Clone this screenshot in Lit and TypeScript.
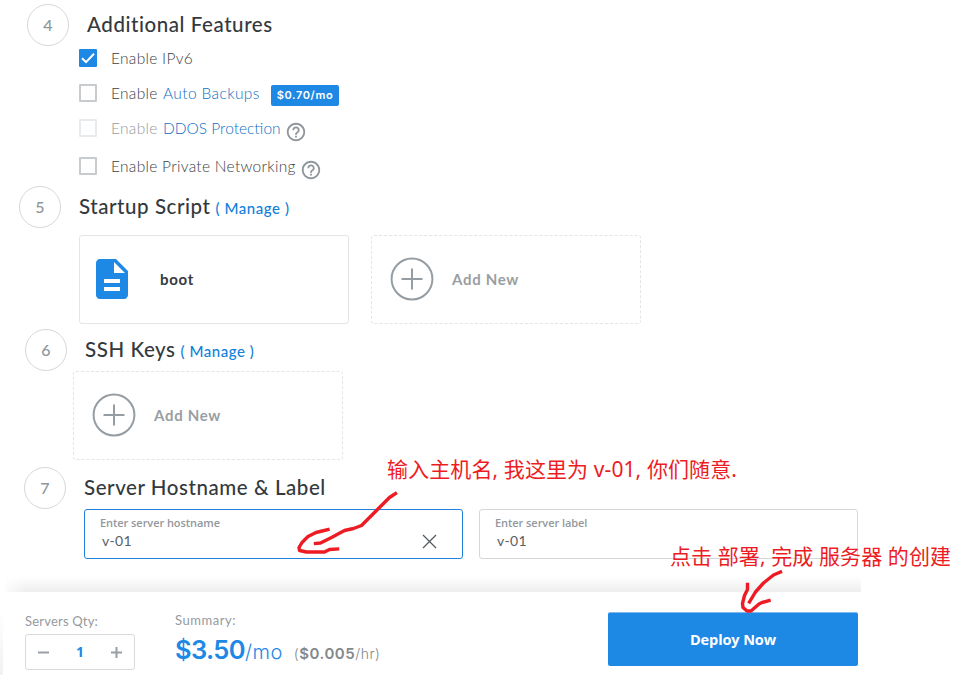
import { LitElement, html, css, svg } from "lit";
import { customElement } from "lit/decorators.js";

const help = html`<svg class="help" viewBox="0 0 24 24"><path d="M11 18h2v-2h-2v2zm1-16C6.480 2 2 6.480 2 12s4.480 10 10 10 10-4.480 10-10S17.520 2 12 2zm0 18c-4.410 0-8-3.590-8-8s3.590-8 8-8 8 3.590 8 8-3.590 8-8 8zm0-14c-2.210 0-4 1.790-4 4h2c0-1.100.9-2 2-2s2 .9 2 2c0 2-3 1.750-3 5h2c0-2.250 3-2.500 3-5 0-2.210-1.790-4-4-4z"/></svg>`;
const addCard = html`<div class="card dashed"><svg class="add" viewBox="0 0 44 44"><circle cx="22" cy="22" r="20.400"/><path d="M22 11.500v21M11.500 22h21"/></svg><span class="addlabel">Add New</span></div>`;

@customElement("app-root")
export class AppRoot extends LitElement {
  static styles = css`
    * { box-sizing: border-box; }
    :host { display: block; position: relative; width: 968px; height: 699px; overflow: hidden; background: #fff; color: #5d6266; font-family: Lato, "Open Sans", sans-serif; white-space: nowrap; }
    .head { display: flex; align-items: center; height: 42px; }
    .num { width: 42px; height: 42px; border: 1px solid #d3d8db; border-radius: 50%; display: grid; place-items: center; padding-bottom: 2px; font: 500 16px Lato; color: #8f979c; margin-right: 18px; }
    h2 { margin: 0; padding-bottom: 2px; font: 500 20.500px/24px Lato; letter-spacing: 0.560px; color: #34393e; }
    .manage { font: 500 15px/20px Lato; letter-spacing: 0.550px; color: #1180dc; margin-left: 5px; padding-top: 1px; }
    .s4 { height: 186px; padding: 4px 0 0 27px; }
    .s5 { height: 143px; padding-left: 19px; }
    .s6 { height: 138px; padding-left: 25px; }
    .s7 { height: 125px; padding-left: 24px; }
    .opts { padding: 3px 0 0 52px; }
    .opt { display: flex; height: 35px; align-items: flex-start; font: 300 15.500px/18px Lato; letter-spacing: 0.300px; color: #3c4043; }
    .opt.tall { height: 38px; }
    .box { width: 18px; height: 18px; border: 2px solid #c8cbce; border-radius: 1px; margin-right: 14px; flex: none; }
    .box.on { background: #1e88e5; border: 0; }
    .box svg { width: 18px; height: 18px; display: block; }
    .grey { width: 52px; }
    .blue { color: #1170c4; }
    .backups { letter-spacing: 0.380px; width: 96px; }
    .ddos { letter-spacing: 0; width: 118px; }
    .off .box { border-color: #e7ebee; }
    .off .grey { color: #96999c; }
    .badge { background: #1e88e5; color: #fff; border-radius: 2px; width: 68px; height: 21px; margin: 1px 0 0 12px; font: 600 11px/21px Inter; letter-spacing: 0.600px; text-align: center; }
    .help { width: 22px; height: 22px; margin: 2px 0 0 4px; fill: #8e959b; flex: none; }
    .cards { display: flex; gap: 22px; }
    .s5 .cards { padding: 7px 0 0 60px; }
    .s6 .cards { padding-left: 48px; }
    .card { width: 270px; height: 89px; border: 1px solid #e3e5e6; border-radius: 3px; display: flex; align-items: center; padding-bottom: 1px; }
    .dashed { border-style: dashed; }
    .doc { width: 32px; height: 40px; margin: 0 32px 0 16px; fill: #1e88e5; }
    .boot { font: 700 15px Lato; letter-spacing: 0.700px; color: #34393e; }
    .add { width: 44px; height: 44px; margin: 0 18px; stroke: #969da2; stroke-width: 2; fill: none; }
    .addlabel { font: 700 15px Lato; letter-spacing: 0.690px; padding-bottom: 1px; color: #999ea2; }
    .fields { display: flex; gap: 16px; padding-left: 60px; }
    .field { width: 379px; height: 50px; border: 1px solid #d5d8da; border-radius: 3px; padding: 5px 15px; position: relative; }
    .field.active { border-color: #1e82dc; }
    .field label { display: block; font: 600 11px/15px "Open Sans"; letter-spacing: -0.060px; color: #93989d; }
    .val { display: block; font: 400 14px/20px Lato; letter-spacing: 0.330px; color: #5b6064; padding: 1px 0 0 2px; }
    .x { position: absolute; right: 25px; top: 24px; width: 15px; height: 15px; stroke: #555a5e; fill: none; stroke-width: 1.300; }
    .shade { width: 856px; height: 16px; margin: 17px 0 0 -19px; background: linear-gradient(90deg, #fffc, transparent 20px), linear-gradient(#fff, #eee); }
    .foot { height: 107px; display: flex; align-items: flex-start; padding-left: 25px; position: relative; }
    .edge { position: absolute; left: 0; top: 18px; width: 3px; height: 65px; background: linear-gradient(#fff, #f1f1f1); }
    .qty { width: 150px; padding-top: 20px; }
    .cap { display: block; font: 400 13px/18px Lato; letter-spacing: 0.200px; color: #959a9e; }
    .sum .cap { letter-spacing: 0.540px; }
    .step { width: 110px; height: 36px; margin-top: 4px; border: 1px solid #d7d9db; border-radius: 3px; display: flex; align-items: center; justify-content: space-between; padding: 0 12px; color: #1e88e5; font: 700 14px "Open Sans"; }
    .step span { padding-bottom: 2px; }
    .step svg { width: 11px; height: 11px; stroke: #999fa4; stroke-width: 2; }
    .sum { width: 433px; padding-top: 19px; }
    .price { display: flex; align-items: baseline; height: 40px; padding-top: 5px; color: #1e88e5; font: 300 20px/32px Inter; letter-spacing: 0.500px; }
    .price b { font: 600 25.500px/32px Inter; letter-spacing: -0.600px; }
    .hr { color: #85888b; font: 300 14px/32px Inter; letter-spacing: 0.550px; margin-left: 11px; }
    .price .hr b { font: 600 15px/32px Inter; letter-spacing: 0.530px; }
    .deploy { width: 250px; height: 54px; margin-top: 20px; border: 0; border-top: 1px solid #7fbaf0; border-radius: 2px; background: #1e88e5; color: #fff; font: 700 14.500px "Open Sans"; letter-spacing: -0.100px; padding: 0; }
    .note { position: absolute; color: #ed1c24; font: 400 21px/30px "Noto Sans", "Noto Sans CJK SC", sans-serif; letter-spacing: 0.100px; }
    .n1 { left: 387px; top: 454px; }
    .n2 { left: 670px; top: 541px; }
    .arrows { position: absolute; left: 0; top: 0; width: 968px; height: 699px; fill: none; stroke: #ed1c24; stroke-width: 3.400; stroke-linecap: square; stroke-linejoin: round; }
  `;
  render() {
    return html`
      <section class="s4">
        <div class="head"><span class="num">4</span><h2>Additional Features</h2></div>
        <div class="opts">
          <div class="opt"><span class="box on"><svg viewBox="0 0 18 18"><path d="M3 9.300l4 3.900L15 4.800" fill="none" stroke="#fff" stroke-width="2"/></svg></span><span>Enable IPv6</span></div>
          <div class="opt"><span class="box"></span><span class="grey">Enable</span><span class="blue backups">Auto Backups</span><span class="badge">$0.70/mo</span></div>
          <div class="opt tall off"><span class="box"></span><span class="grey">Enable</span><span class="blue ddos">DDOS Protection</span>${help}</div>
          <div class="opt"><span class="box"></span><span>Enable Private Networking</span>${help}</div>
        </div>
      </section>
      <section class="s5">
        <div class="head"><span class="num">5</span><h2>Startup Script</h2><span class="manage">( Manage )</span></div>
        <div class="cards">
          <div class="card"><svg class="doc" viewBox="4 2 16 20"><path d="M14 2H6c-1.100 0-1.990.9-1.990 2L4 20c0 1.100.89 2 1.990 2H18c1.100 0 2-.9 2-2V8l-6-6zm2 16H8v-2h8v2zm0-4H8v-2h8v2zm-3-5V3.500L18.500 9H13z"/></svg><span class="boot">boot</span></div>
          ${addCard}
        </div>
      </section>
      <section class="s6">
        <div class="head"><span class="num">6</span><h2>SSH Keys</h2><span class="manage">( Manage )</span></div>
        <div class="cards">${addCard}</div>
      </section>
      <section class="s7">
        <div class="head"><span class="num">7</span><h2>Server Hostname &amp; Label</h2></div>
        <div class="fields">
          <div class="field active"><label>Enter server hostname</label><span class="val">v-01</span><svg class="x" viewBox="0 0 15 15"><path d="M1 1l13 13M14 1L1 14"/></svg></div>
          <div class="field"><label>Enter server label</label><span class="val">v-01</span></div>
        </div>
        <div class="shade"></div>
      </section>
      <footer class="foot">
        <span class="edge"></span>
        <div class="qty"><span class="cap">Servers Qty:</span>
          <div class="step"><svg viewBox="0 0 11 11"><path d="M0 5.500h11"/></svg><span>1</span><svg viewBox="0 0 11 11"><path d="M0 5.500h11M5.500 0v11"/></svg></div></div>
        <div class="sum"><span class="cap">Summary:</span>
          <div class="price"><b>$3.50</b><span>/mo</span><span class="hr"><span>(</span><b>$0.005</b><span>/hr)</span></span></div></div>
        <button class="deploy">Deploy Now</button>
      </footer>
      <span class="note n1">输入主机名, 我这里为 v-01, 你们随意.</span>
      <span class="note n2">点击 部署, 完成 服务器 的创建</span>
      <svg class="arrows" viewBox="0 0 968 699">${svg`
        <path d="M395.500 493.500l-6 4-13 13-15 15-8 3-9 2-13 7-11 5.500-5 .5"/>
        <path d="M328 529.500l-12 3-8 4-6 6-3 5 .5 3 7 1.500 18 0 5-2.500 8-.5"/>
        <path d="M780.500 572l-7 3-10 8-8 9-6 10"/>
        <path d="M747.500 584.500l0 5-3 6-2 8 .5 4 4 3.500 4 0 8-7 3-1.500 7-2"/>`}</svg>`;
  }
}
